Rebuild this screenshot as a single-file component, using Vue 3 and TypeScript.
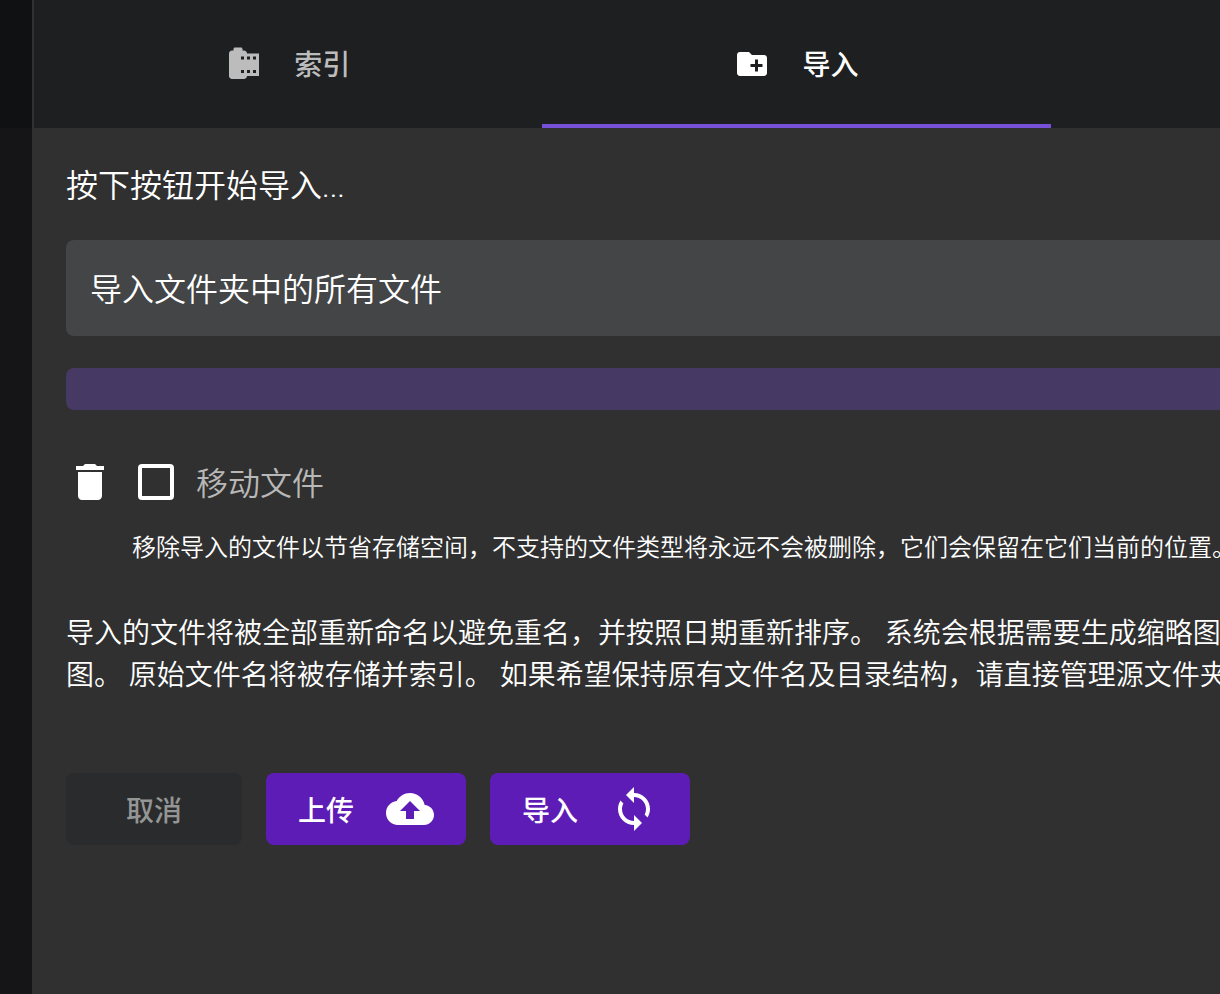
<script setup lang="ts">
import { ref } from 'vue'

interface Tab {
  id: string
  label: string
  icon: string
}

const tabs: Tab[] = [
  {
    id: 'index',
    label: '索引',
    icon: 'M14 5c0-1.1-.9-2-2-2h-1V2c0-.55-.45-1-1-1H6c-.55 0-1 .45-1 1v1H4c-1.1 0-2 .9-2 2v15c0 1.1.9 2 2 2h8c1.1 0 2-.9 2-2h8V5h-8zm-2 13h-2v-2h2v2zm0-9h-2V7h2v2zm4 9h-2v-2h2v2zm0-9h-2V7h2v2zm4 9h-2v-2h2v2zm0-9h-2V7h2v2z',
  },
  {
    id: 'import',
    label: '导入',
    icon: 'M20 6h-8l-2-2H4c-1.11 0-1.99.89-1.99 2L2 18c0 1.11.89 2 2 2h16c1.11 0 2-.89 2-2V8c0-1.11-.89-2-2-2zm-1 8h-3v3h-2v-3h-3v-2h3V9h2v3h3v2z',
  },
]

const active = ref('import')
const folder = ref('all')
const moveFiles = ref(false)
</script>

<template>
  <div class="page">
    <aside class="rail"><div class="rail-top"></div></aside>
    <main class="main">
      <nav class="tabs" role="tablist">
        <button
          v-for="tab in tabs"
          :key="tab.id"
          type="button"
          role="tab"
          class="tab"
          :class="{ active: active === tab.id }"
          :aria-selected="active === tab.id"
          @click="active = tab.id"
        >
          <svg class="tab-icon" viewBox="0 0 24 24" aria-hidden="true"><path :d="tab.icon" /></svg>
          <span class="tab-label">{{ tab.label }}</span>
        </button>
        <div class="tabs-rest"></div>
      </nav>

      <form class="content" @submit.prevent>
        <p class="status">按下按钮开始导入...</p>
        <select v-model="folder" class="folder" aria-label="文件夹">
          <option value="all">导入文件夹中的所有文件</option>
        </select>
        <div class="progress" role="progressbar" aria-label="导入"></div>

        <div class="option">
          <svg class="icon" viewBox="0 0 24 24" aria-hidden="true">
            <path d="M6 19c0 1.1.9 2 2 2h8c1.1 0 2-.9 2-2V7H6v12zM19 4h-3.5l-1-1h-5l-1 1H5v2h14V4z" />
          </svg>
          <input id="move" v-model="moveFiles" type="checkbox" class="check" aria-describedby="move-hint" />
          <label for="move" class="option-label">移动文件</label>
        </div>
        <p id="move-hint" class="hint">移除导入的文件以节省存储空间，不支持的文件类型将永远不会被删除，它们会保留在它们当前的位置。</p>

        <p class="info">
          导入的文件将被全部重新命名以避免重名，并按照日期重新排序。 系统会根据需要生成缩略图<br />图。 原始文件名将被存储并索引。 如果希望保持原有文件名及目录结构，请直接管理源文件夹
        </p>

        <div class="actions">
          <button type="button" class="btn cancel">取消</button>
          <button type="button" class="btn primary">
            <span>上传</span>
            <svg class="icon" viewBox="0 0 24 24" aria-hidden="true">
              <path d="M19.35 10.04C18.67 6.59 15.64 4 12 4 9.11 4 6.6 5.64 5.35 8.04 2.34 8.36 0 10.91 0 14c0 3.31 2.69 6 6 6h13c2.76 0 5-2.24 5-5 0-2.64-2.05-4.78-4.65-4.96zM14 13v4h-4v-4H7l5-5 5 5h-3z" />
            </svg>
          </button>
          <button type="submit" class="btn primary">
            <span>导入</span>
            <svg class="icon" viewBox="0 0 24 24" aria-hidden="true">
              <path d="M12 4V1L8 5l4 4V6c3.31 0 6 2.69 6 6 0 1.01-.25 1.97-.7 2.8l1.46 1.46C19.54 15.03 20 13.57 20 12c0-4.42-3.58-8-8-8zm0 14c-3.31 0-6-2.69-6-6 0-1.01.25-1.97.7-2.8L5.24 7.74C4.46 8.97 4 10.43 4 12c0 4.42 3.58 8 8 8v3l4-4-4-4v3z" />
            </svg>
          </button>
        </div>
      </form>
    </main>
  </div>
</template>

<style>
body {
  margin: 0;
  background: #303030;
}
</style>

<style scoped>
.page {
  display: flex;
  min-height: 100vh;
  overflow: hidden;
  background: #303030;
  color: #fff;
  font-family: Roboto, "Noto Sans CJK SC", sans-serif;
  font-weight: 350;
}
.page *,
.page {
  box-sizing: border-box;
}
button,
select {
  font: inherit;
  color: inherit;
  border: 0;
  margin: 0;
}
svg {
  fill: currentColor;
  flex: none;
}
p {
  margin: 0;
}
.rail {
  flex: 0 0 32px;
  background: #151517;
}
.rail-top {
  height: 128px;
  background: #101113;
}
.main {
  flex: 1;
  min-width: 0;
  overflow: hidden;
}
.tabs {
  display: flex;
  height: 128px;
  background: #1e1f21;
  border-left: 2px solid #303132;
}
.tab {
  flex: 3;
  display: flex;
  align-items: center;
  justify-content: center;
  gap: 32px;
  padding: 4px 0 0;
  background: none;
  border-bottom: 4px solid transparent;
  color: #bcbcbd;
  font-size: 28px;
  font-weight: 500;
}
.tab.active {
  color: #fff;
  border-bottom-color: #7650d6;
}
.tab-icon {
  width: 36px;
  height: 36px;
}
.tab-label {
  padding-bottom: 2px;
}
.tabs-rest {
  flex: 1;
}
.content {
  padding: 34px 0 32px 34px;
}
.status {
  font-size: 32px;
  line-height: 48px;
}
.folder {
  display: block;
  appearance: none;
  width: 100%;
  height: 96px;
  margin-top: 30px;
  padding: 4px 24px 0;
  border-radius: 8px 0 0 8px;
  background: #444546;
  font-size: 32px;
}
.progress {
  height: 42px;
  margin-top: 32px;
  border-radius: 8px 0 0 8px;
  background: #463963;
}
.option {
  display: flex;
  align-items: center;
  height: 48px;
  margin-top: 48px;
}
.icon {
  width: 48px;
  height: 48px;
}
.check {
  appearance: none;
  width: 36px;
  height: 36px;
  margin: 0 22px 0 24px;
  border: 4px solid #fff;
  border-radius: 4px;
}
.check:checked {
  background: #fff;
}
.option-label {
  padding-top: 4px;
  color: #b8b8b8;
  font-size: 32px;
  line-height: 48px;
}
.hint {
  margin-top: 24px;
  padding-left: 66px;
  font-size: 24px;
  line-height: 36px;
  white-space: nowrap;
}
.info {
  margin-top: 47px;
  font-size: 28px;
  line-height: 42px;
  white-space: nowrap;
}
.actions {
  display: flex;
  gap: 24px;
  margin-top: 76px;
}
.btn {
  display: flex;
  align-items: center;
  justify-content: center;
  gap: 32px;
  height: 72px;
  padding: 0 32px;
  border-radius: 8px;
  font-size: 28px;
  font-weight: 500;
}
.cancel {
  min-width: 176px;
  background: #292b2c;
  color: #949595;
}
.primary {
  background: #5e1cb6;
}
</style>
